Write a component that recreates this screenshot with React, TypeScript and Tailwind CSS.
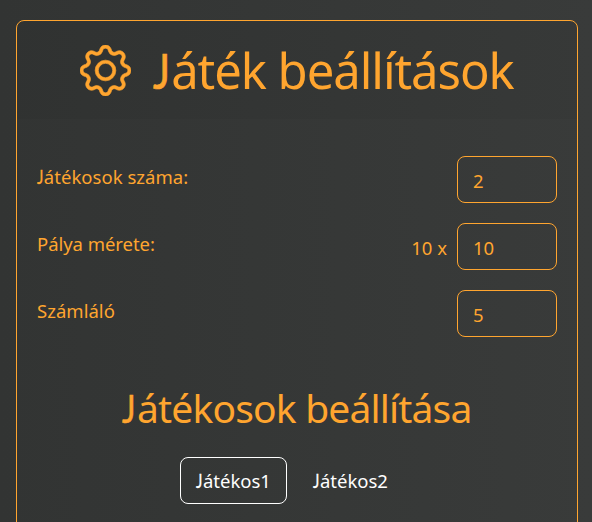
import { BsGear } from "react-icons/bs";

const fields = [
  { label: "Játékosok száma:", spacing: "tracking-[0.03px]", prefix: "", value: "2" },
  { label: "Pálya mérete:", spacing: "tracking-[-0.05px]", prefix: "10 x", value: "10" },
  { label: "Számláló", spacing: "tracking-[0.03px]", prefix: "", value: "5" },
];

// Sets an initial J in Lato, whose hook rests on the baseline.
function Title({ text }: { text: string }) {
  if (!text.startsWith("J")) return <>{text}</>;
  return (
    <>
      <span className="inline-block w-[0.37em] origin-left scale-x-[0.82] font-['Lato',sans-serif] leading-none [-webkit-text-stroke:0.015em_currentColor]">J</span>
      {text.slice(1)}
    </>
  );
}

export default function App() {
  return (
    <main className="h-[522px] overflow-hidden bg-linear-to-r from-[#323433] to-[#393b3a] px-4 pt-5 pr-3.5 font-['Noto_Sans','Open_Sans',sans-serif] text-[#ffa52f]">
      <section className="h-[560px] rounded-lg border border-[#ffa52f]">
        <header className="flex h-[98px] items-center rounded-t-lg bg-black/3 pl-[63px]">
          <BsGear className="size-[51px] shrink-0" strokeWidth={0.2} />
          <h1 className="ml-[22px] text-[49px] leading-none tracking-[-1.05px] whitespace-nowrap">
            <Title text="Játék beállítások" />
          </h1>
        </header>
        <div className="px-5 pt-[37px]">
          <div className="flex flex-col gap-5">
            {fields.map((f) => (
              <div key={f.label} className="flex h-[47px] items-start text-[18.5px] leading-[27px]">
                <span className={`pt-[7px] ${f.spacing}`}>
                  <Title text={f.label} />
                </span>
                <span className="mr-[10px] ml-auto pt-[11px]">{f.prefix}</span>
                <div className="h-[47px] w-[100px] rounded-lg border border-[#ffa52f] pt-[10px] pl-[15px]">
                  {f.value}
                </div>
              </div>
            ))}
          </div>
          <h2 className="mt-[46px] text-center text-[39px] leading-[50px] tracking-[-0.82px] whitespace-nowrap">
            <Title text="Játékosok beállítása" />
          </h2>
          <nav className="mt-[24px] ml-[143px] flex gap-[10px] text-[18.5px] leading-[27px] tracking-[0px] text-white">
            <button className="h-[47px] w-[107px] rounded-lg border border-white">
              <Title text="Játékos1" />
            </button>
            <button className="h-[47px] w-[107px]">
              <Title text="Játékos2" />
            </button>
          </nav>
        </div>
      </section>
    </main>
  );
}
